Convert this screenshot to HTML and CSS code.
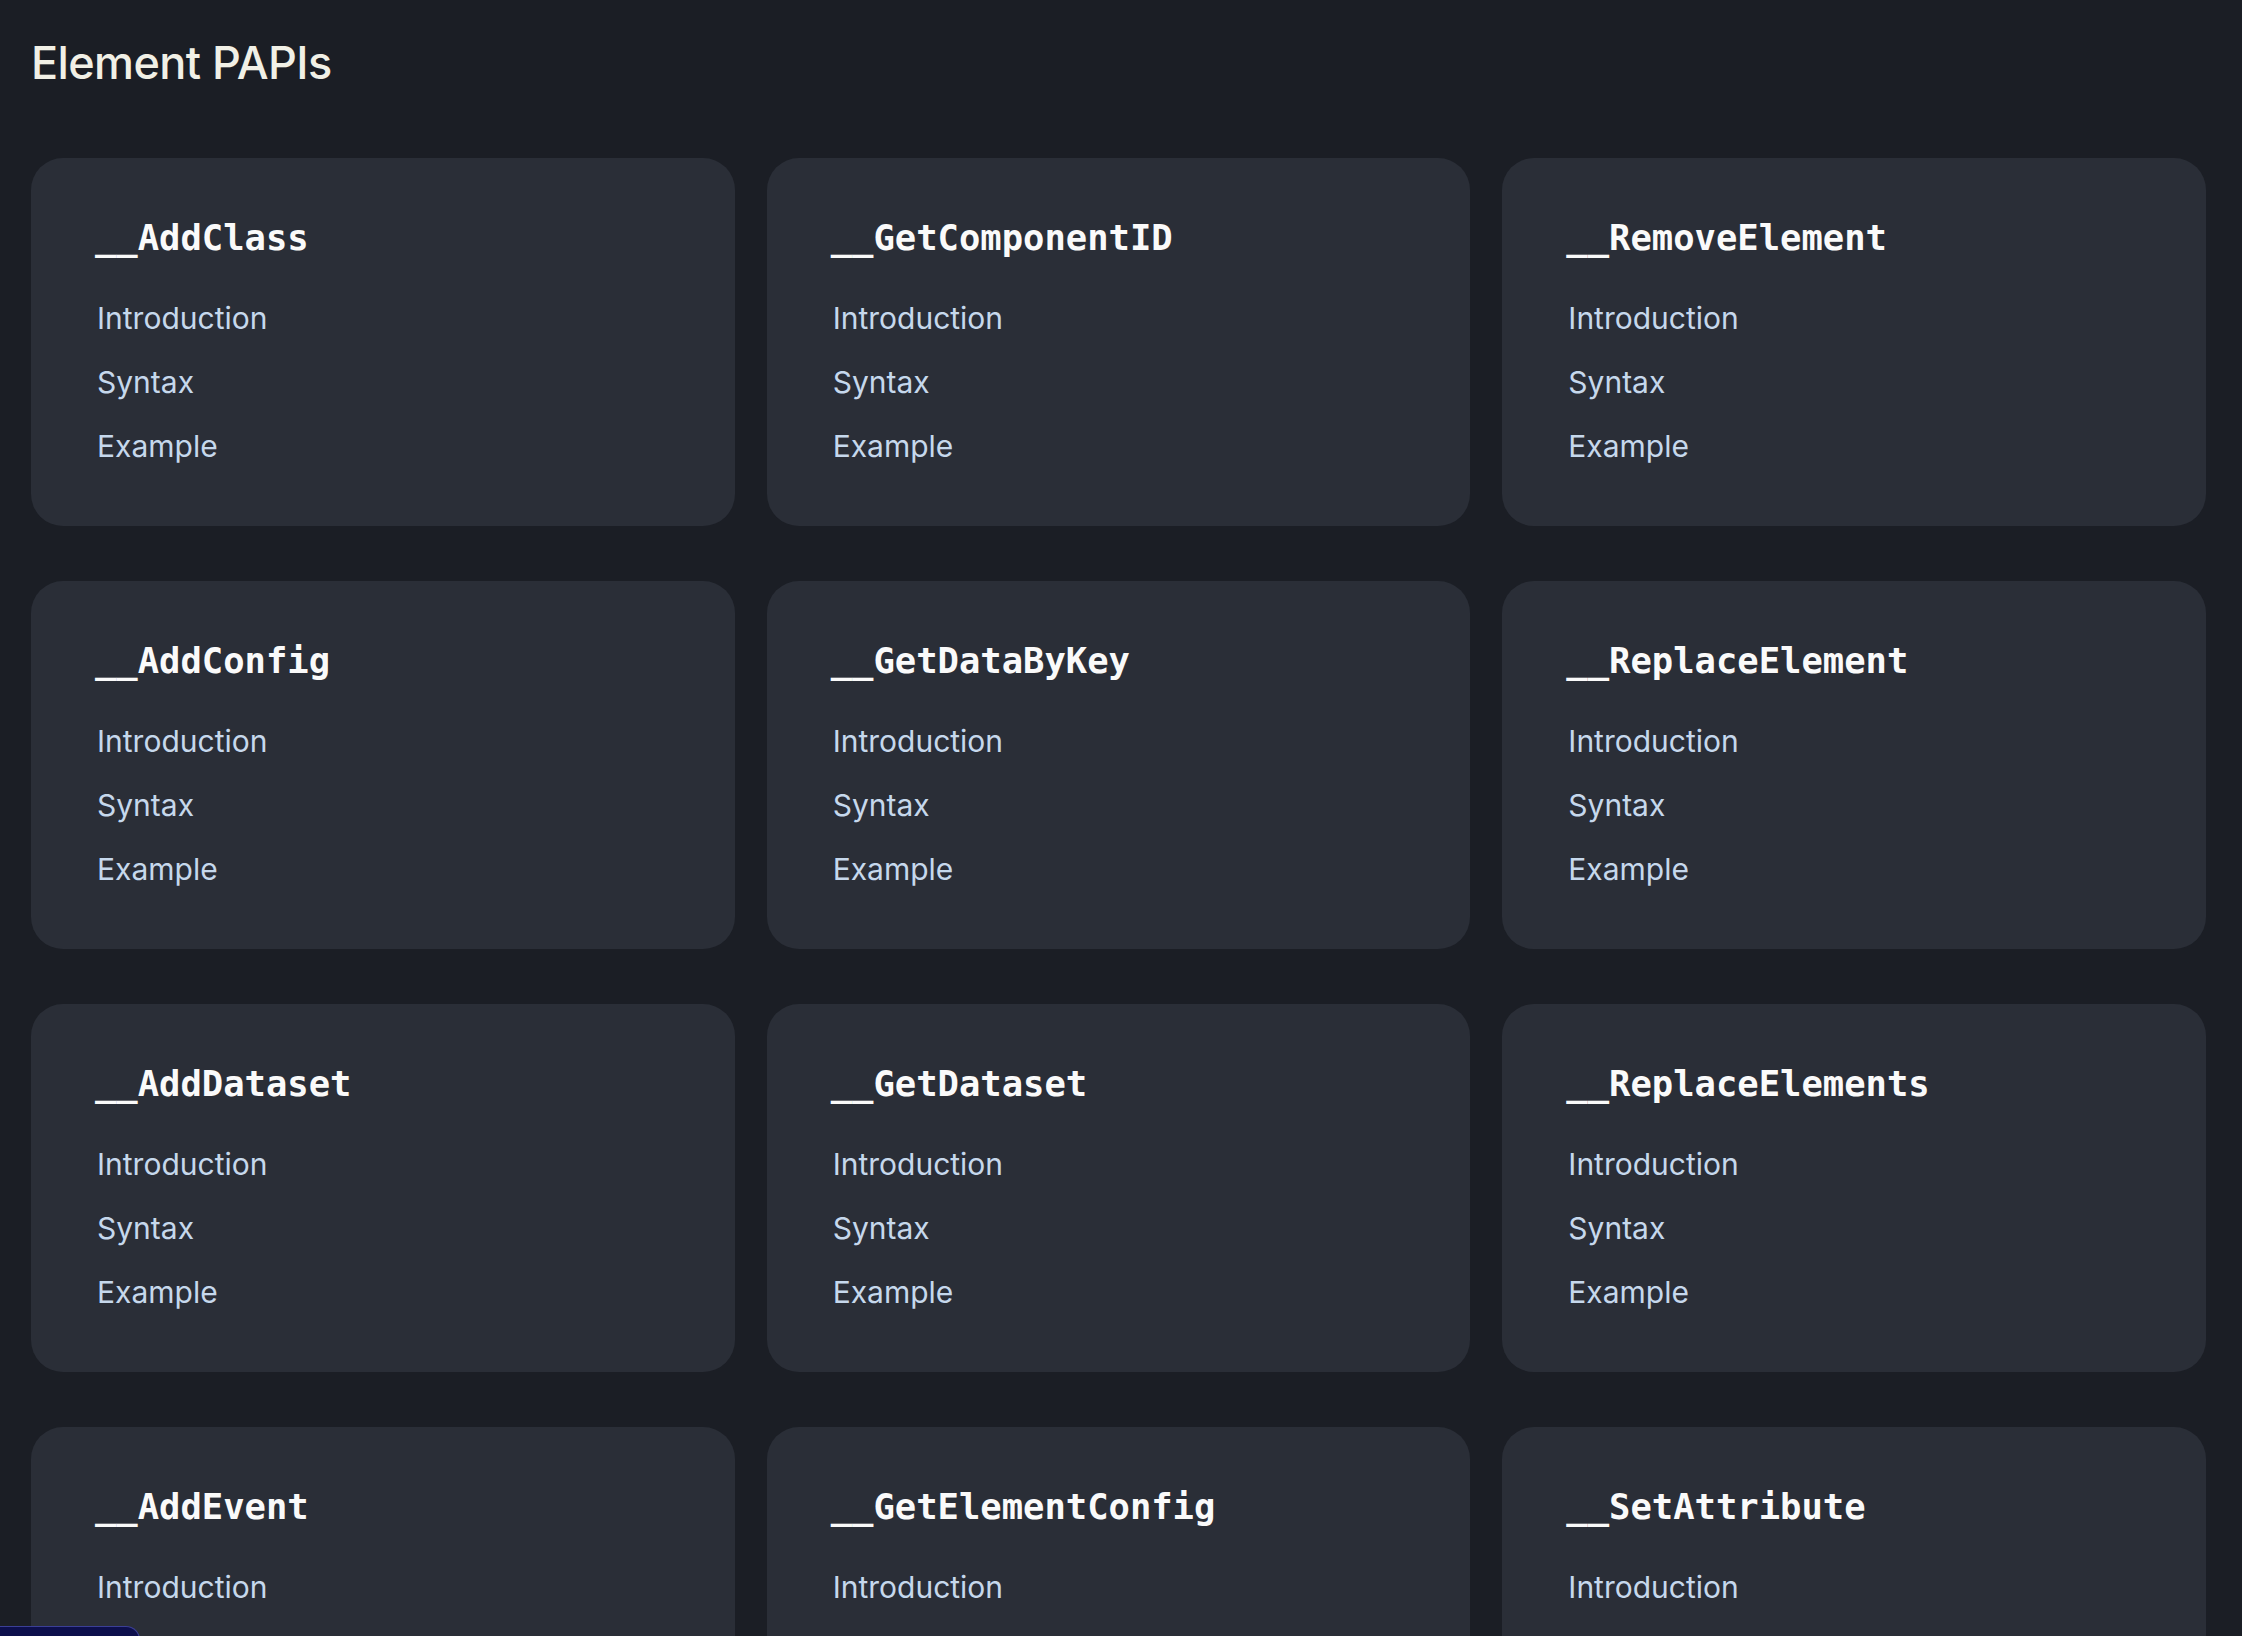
FILE: index.html
```html
<!DOCTYPE html>
<html lang="en">
<head>
<meta charset="utf-8">
<title>Element PAPIs</title>
<link rel="stylesheet" href="styles.css">
</head>
<body>
<main class="page">
  <h1 class="page-title">Element PAPIs</h1>
  <div class="grid">
    <section class="card"><h2 class="card-title">__AddClass</h2><ul class="links"><li>Introduction</li><li>Syntax</li><li>Example</li></ul></section>
    <section class="card"><h2 class="card-title">__GetComponentID</h2><ul class="links"><li>Introduction</li><li>Syntax</li><li>Example</li></ul></section>
    <section class="card"><h2 class="card-title">__RemoveElement</h2><ul class="links"><li>Introduction</li><li>Syntax</li><li>Example</li></ul></section>
    <section class="card"><h2 class="card-title">__AddConfig</h2><ul class="links"><li>Introduction</li><li>Syntax</li><li>Example</li></ul></section>
    <section class="card"><h2 class="card-title">__GetDataByKey</h2><ul class="links"><li>Introduction</li><li>Syntax</li><li>Example</li></ul></section>
    <section class="card"><h2 class="card-title">__ReplaceElement</h2><ul class="links"><li>Introduction</li><li>Syntax</li><li>Example</li></ul></section>
    <section class="card"><h2 class="card-title">__AddDataset</h2><ul class="links"><li>Introduction</li><li>Syntax</li><li>Example</li></ul></section>
    <section class="card"><h2 class="card-title">__GetDataset</h2><ul class="links"><li>Introduction</li><li>Syntax</li><li>Example</li></ul></section>
    <section class="card"><h2 class="card-title">__ReplaceElements</h2><ul class="links"><li>Introduction</li><li>Syntax</li><li>Example</li></ul></section>
    <section class="card"><h2 class="card-title">__AddEvent</h2><ul class="links"><li>Introduction</li><li>Syntax</li><li>Example</li></ul></section>
    <section class="card"><h2 class="card-title">__GetElementConfig</h2><ul class="links"><li>Introduction</li><li>Syntax</li><li>Example</li></ul></section>
    <section class="card"><h2 class="card-title">__SetAttribute</h2><ul class="links"><li>Introduction</li><li>Syntax</li><li>Example</li></ul></section>
  </div>
</main>
<div class="dock"></div>
</body>
</html>
```
FILE: styles.css
```css
html, body {
  margin: 0;
  padding: 0;
  background: #1b1e25;
  overflow: hidden;
}
body {
  font-family: Inter, "Noto Sans", sans-serif;
}
.page {
  padding: 37px 36px 0 31px;
}
.page-title {
  margin: 0 0 68px 0;
  font-size: 45px;
  line-height: 52.8px;
  font-weight: 500;
  letter-spacing: -0.6px;
  color: #f1f0e6;
}
.grid {
  display: grid;
  grid-template-columns: repeat(3, 1fr);
  column-gap: 32px;
  row-gap: 55px;
}
.card {
  background: #2a2e37;
  border-radius: 32px;
  height: 368px;
  box-sizing: border-box;
  padding: 56px 64px 0 64px;
}
.card-title {
  margin: 0;
  font-family: "DejaVu Sans Mono", "Liberation Mono", monospace;
  font-weight: bold;
  font-size: 35.5px;
  line-height: 48px;
  color: #fafafa;
}
.links {
  list-style: none;
  margin: 24px 0 0 2px;
  padding: 0;
}
.links li {
  font-size: 30px;
  line-height: 64px;
  color: #c6d8ec;
}
.dock {
  position: fixed;
  left: 0;
  bottom: -40px;
  width: 139px;
  height: 48px;
  background: #0d0f4c;
  border: 1px solid #3b3f96;
  border-left: none;
  border-radius: 0 14px 0 0;
}
```
